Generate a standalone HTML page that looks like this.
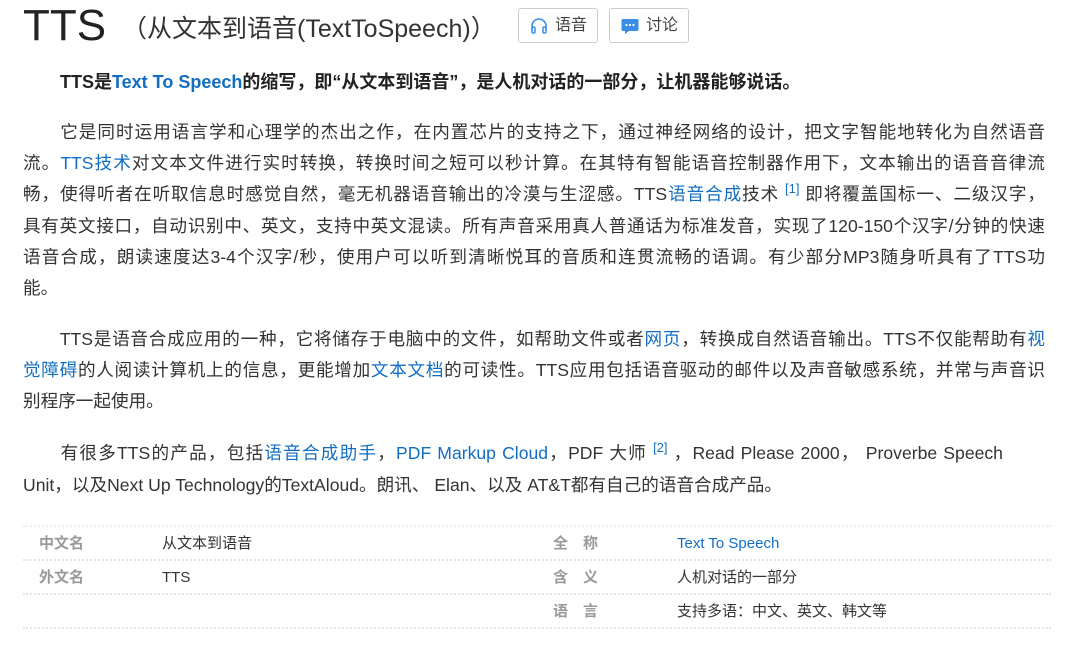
<!DOCTYPE html>
<html><head><meta charset="utf-8">
<style>
*{margin:0;padding:0;box-sizing:border-box}
body{width:1065px;height:665px;background:#fff;font-family:"Liberation Sans","Noto Sans CJK SC",sans-serif;color:#333;position:relative;overflow:hidden}
a{color:#136ec2;text-decoration:none}
.t{position:absolute;left:23px;top:-2px;font-size:44px;color:#222;line-height:56px}
.st{position:absolute;left:122px;top:13px;font-size:25px;color:#333;line-height:32px}
.btn{position:absolute;top:8px;height:35px;border:1px solid #ccc;border-radius:3px;font-size:16px;color:#444;line-height:33px;padding-left:36px}
.intro{position:absolute;left:60px;top:70px;font-size:18px;font-weight:bold;color:#222;line-height:24px}
.p{position:absolute;left:23px;width:1022px;font-size:17.6px;line-height:31px;color:#333}
.p span.l{display:block;text-align:justify;text-align-last:justify;white-space:nowrap}
.p span.e{display:block;white-space:nowrap}
sup{font-size:13px;color:#136ec2;vertical-align:0;position:relative;top:-7px}
.row{position:absolute;left:23px;width:1028px;height:34px;border-bottom:2px dotted #e6e6e6;font-size:15px;line-height:32px}
.row div{position:absolute;top:1px}
.lb{color:#999;font-weight:bold}
</style></head><body>
<div class="t">TTS</div>
<div class="st">（从文本到语音(TextToSpeech)）</div>
<div class="btn" style="left:518px;width:80px">
<svg style="position:absolute;left:11px;top:9px" width="18" height="16" viewBox="0 0 18 16"><path d="M2 12V8a7 7 0 0 1 14 0v4" fill="none" stroke="#3a8ee6" stroke-width="1.6"/><rect x="2" y="9" width="3" height="6" rx="1.2" fill="none" stroke="#3a8ee6" stroke-width="1.5"/><rect x="13" y="9" width="3" height="6" rx="1.2" fill="none" stroke="#3a8ee6" stroke-width="1.5"/></svg>语音</div>
<div class="btn" style="left:609px;width:80px">
<svg style="position:absolute;left:11px;top:9px" width="18" height="17" viewBox="0 0 18 17"><path d="M2 1h14a1.5 1.5 0 0 1 1.5 1.5v9a1.5 1.5 0 0 1-1.5 1.5H8l-4 3v-3H2A1.5 1.5 0 0 1 .5 11.5v-9A1.5 1.5 0 0 1 2 1z" fill="#3a8ee6"/><circle cx="5.5" cy="7" r="1.1" fill="#fff"/><circle cx="9" cy="7" r="1.1" fill="#fff"/><circle cx="12.5" cy="7" r="1.1" fill="#fff"/></svg>讨论</div>
<div class="intro">TTS是<a>Text To Speech</a>的缩写，即“从文本到语音”，是人机对话的一部分，让机器能够说话。</div>
<div class="p" style="top:117px">
<span class="l">　　它是同时运用语言学和心理学的杰出之作，在内置芯片的支持之下，通过神经网络的设计，把文字智能地转化为自然语音</span>
<span class="l">流。<a>TTS技术</a>对文本文件进行实时转换，转换时间之短可以秒计算。在其特有智能语音控制器作用下，文本输出的语音音律流</span>
<span class="l">畅，使得听者在听取信息时感觉自然，毫无机器语音输出的冷漠与生涩感。TTS<a>语音合成</a>技术 <sup>[1]</sup> 即将覆盖国标一、二级汉字，</span>
<span class="l">具有英文接口，自动识别中、英文，支持中英文混读。所有声音采用真人普通话为标准发音，实现了120-150个汉字/分钟的快速</span>
<span class="l">语音合成，朗读速度达3-4个汉字/秒，使用户可以听到清晰悦耳的音质和连贯流畅的语调。有少部分MP3随身听具有了TTS功</span>
<span class="e">能。</span>
</div>
<div class="p" style="top:324px">
<span class="l">　　TTS是语音合成应用的一种，它将储存于电脑中的文件，如帮助文件或者<a>网页</a>，转换成自然语音输出。TTS不仅能帮助有<a>视</a></span>
<span class="l"><a>觉障碍</a>的人阅读计算机上的信息，更能增加<a>文本文档</a>的可读性。TTS应用包括语音驱动的邮件以及声音敏感系统，并常与声音识</span>
<span class="e">别程序一起使用。</span>
</div>
<div class="p" style="top:438px;width:980px">
<span class="l">　　有很多TTS的产品，包括<a>语音合成助手</a>，<a>PDF Markup Cloud</a>，PDF 大师 <sup>[2]</sup> ，Read Please 2000， Proverbe Speech</span>
<span class="e">Unit，以及Next Up Technology的TextAloud。朗讯、 Elan、以及 AT&amp;T都有自己的语音合成产品。</span>
</div>
<div style="position:absolute;left:23px;top:525px;width:1028px;border-top:2px dotted #eee"></div>
<div class="row" style="top:527px"><div class="lb" style="left:16px">中文名</div><div style="left:139px">从文本到语音</div><div class="lb" style="left:530px">全　称</div><div style="left:654px"><a>Text To Speech</a></div></div>
<div class="row" style="top:561px"><div class="lb" style="left:16px">外文名</div><div style="left:139px">TTS</div><div class="lb" style="left:530px">含　义</div><div style="left:654px">人机对话的一部分</div></div>
<div class="row" style="top:595px"><div class="lb" style="left:530px">语　言</div><div style="left:654px">支持多语：中文、英文、韩文等</div></div>
</body></html>
